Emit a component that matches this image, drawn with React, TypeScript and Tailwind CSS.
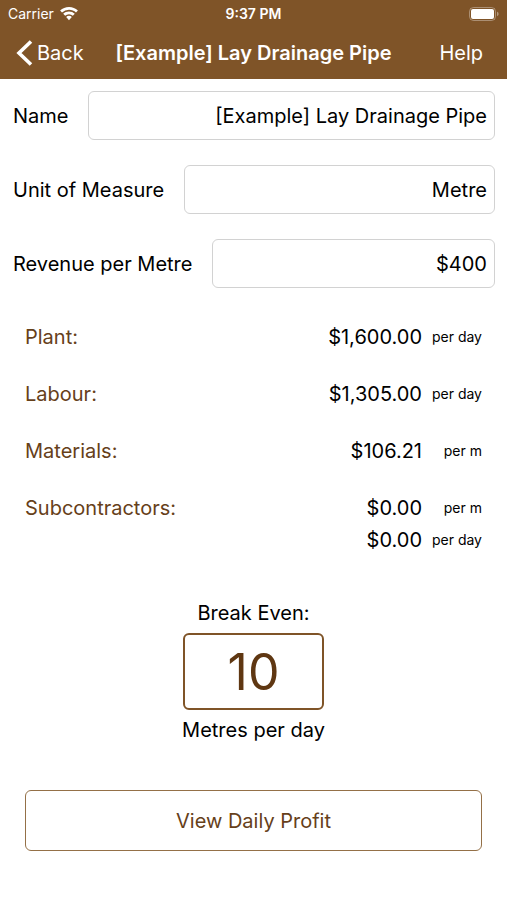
import React, { useState } from 'react';

interface CostRate {
  amount: string;
  per: string;
}

interface CostItem {
  name: string;
  rates: CostRate[];
}

const costs: CostItem[] = [
  { name: 'Plant', rates: [{ amount: '$1,600.00', per: 'per day' }] },
  { name: 'Labour', rates: [{ amount: '$1,305.00', per: 'per day' }] },
  { name: 'Materials', rates: [{ amount: '$106.21', per: 'per m' }] },
  {
    name: 'Subcontractors',
    rates: [
      { amount: '$0.00', per: 'per m' },
      { amount: '$0.00', per: 'per day' },
    ],
  },
];

const WifiIcon: React.FC = () => (
  <svg viewBox="0 0 18 14" className="w-[18px] h-[14px]" fill="currentColor" aria-hidden="true">
    <path d="M9 0C5.600 0 2.500 1.300.1 3.500l1.900 2A10.200 10.200 0 0 1 9 2.700c2.700 0 5.200 1 7 2.800l1.900-2A12.900 12.900 0 0 0 9 0Z" />
    <path d="M9 4.400c-2.200 0-4.300.9-5.800 2.300l2 2a5.500 5.500 0 0 1 7.600 0l2-2A8.400 8.400 0 0 0 9 4.400Z" />
    <path d="M9 8.800c-1.100 0-2.100.4-2.800 1.100L9 13.200l2.800-3.300C11.100 9.200 10.100 8.800 9 8.800Z" />
  </svg>
);

const BatteryIcon: React.FC = () => (
  <svg viewBox="0 0 30 14" className="w-[30px] h-[14px]" aria-hidden="true">
    <rect x=".5" y=".5" width="26" height="13" rx="4" fill="none" stroke="#fff" strokeOpacity=".35" />
    <rect x="2" y="2" width="23" height="10" rx="2" fill="#fff" />
    <path d="M28 4.800c1 .3 1.600 1.200 1.600 2.200s-.6 1.900-1.600 2.200Z" fill="#fff" fillOpacity=".4" />
  </svg>
);

interface FieldProps {
  id: string;
  label: string;
  value: string;
  onChange: (value: string) => void;
}

const Field: React.FC<FieldProps> = ({ id, label, value, onChange }) => (
  <div className="flex items-center gap-5">
    <label htmlFor={id} className="shrink-0">{label}</label>
    <input
      id={id}
      type="text"
      value={value}
      onChange={(e) => onChange(e.target.value)}
      className="flex-1 min-w-0 h-[49px] px-[7px] text-right bg-white border border-[#d2d2d2] rounded-md outline-none"
    />
  </div>
);

const App: React.FC = () => {
  const [name, setName] = useState('[Example] Lay Drainage Pipe');
  const [unit, setUnit] = useState('Metre');
  const [revenue, setRevenue] = useState('$400');

  return (
    <div className="min-h-screen bg-white text-black text-[20px] leading-6 font-['Inter',sans-serif]">
      <header className="bg-[#7f5428] text-white">
        <div className="grid grid-cols-3 items-center h-[27px] px-2 text-[14px]">
          <div className="flex items-center gap-1.5">
            <span>Carrier</span>
            <WifiIcon />
          </div>
          <span className="text-center font-semibold">9:37 PM</span>
          <div className="flex justify-end">
            <BatteryIcon />
          </div>
        </div>
        <nav className="grid grid-cols-[1fr_auto_1fr] items-center h-[52px] px-4">
          <button type="button" className="flex items-center gap-1">
            <svg viewBox="0 0 17 26" className="w-[17px] h-[26px]" fill="none" stroke="currentColor" strokeWidth="3.600" aria-hidden="true">
              <path d="M15 1.500 3 13l12 11.500" />
            </svg>
            Back
          </button>
          <h1 className="font-semibold">{name}</h1>
          <button type="button" className="justify-self-end px-2">Help</button>
        </nav>
      </header>

      <main>
        <section className="flex flex-col gap-[25px] pt-3 pl-[13px] pr-3">
          <Field id="name" label="Name" value={name} onChange={setName} />
          <Field id="unit" label="Unit of Measure" value={unit} onChange={setUnit} />
          <Field id="revenue" label="Revenue per Metre" value={revenue} onChange={setRevenue} />
        </section>

        <dl className="flex flex-col gap-[33px] mt-[37px] px-[25px]">
          {costs.map((cost) => (
            <div key={cost.name} className="flex justify-between">
              <dt className="text-[#66401a]">{cost.name}:</dt>
              <dd className="flex flex-col gap-2">
                {cost.rates.map((rate) => (
                  <div key={rate.per} className="flex items-center justify-end">
                    <span>{rate.amount}</span>
                    <span className="w-[60px] text-right text-[14px]">{rate.per}</span>
                  </div>
                ))}
              </dd>
            </div>
          ))}
        </dl>

        <section className="flex flex-col items-center mt-[49px]">
          <h2>Break Even:</h2>
          <output className="flex items-center justify-center w-[141px] h-[77px] my-2 border-2 border-[#7f5428] rounded-md text-[50px] text-[#5f3712]">
            10
          </output>
          <p>Metres per day</p>
        </section>

        <div className="px-[25px] mt-12 pb-12">
          <button type="button" className="block w-full h-[61px] border border-[#947047] rounded-md text-[#66401a]">
            View Daily Profit
          </button>
        </div>
      </main>
    </div>
  );
};

export default App;
